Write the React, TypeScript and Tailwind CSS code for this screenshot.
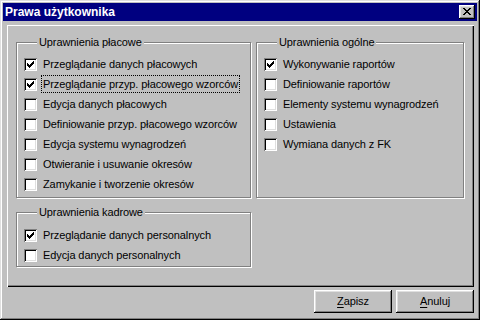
import React from 'react';

const font = { fontFamily: '"Liberation Sans", Arial, sans-serif' };

const CheckMark = () => (
    <svg width="7" height="7" viewBox="0 0 7 7" shapeRendering="crispEdges" className="absolute left-[3px] top-[3px]">
        <path d="M6 0h1v3h-1z M5 1h1v3h-1z M4 2h1v3h-1z M3 3h1v3h-1z M2 4h1v3h-1z M1 3h1v3h-1z M0 2h1v3h-1z" fill="#000" />
    </svg>
);

const CheckBox = ({ checked }: { checked?: boolean }) => (
    <div className="relative w-[13px] h-[13px] shrink-0 bg-white shadow-[inset_1px_1px_#808080,inset_-1px_-1px_#fff,inset_2px_2px_#000,inset_-2px_-2px_#dfdfdf]">
        {checked && <CheckMark />}
    </div>
);

const Row = ({ label, checked, focused }: { label: string, checked?: boolean, focused?: boolean }) => (
    <div className="flex items-center h-[20px]">
        <CheckBox checked={checked} />
        <span className={`ml-[4px] h-[18px] flex items-center pl-[1px] pr-[1px] border border-dotted ${focused ? 'border-black' : 'border-transparent'}`}>
            {label}
        </span>
    </div>
);

// etched group frame with the caption laid over its top line
const Group = ({ title, children, className }: { title: string, children: React.ReactNode, className: string }) => (
    <div className={`relative border border-[#808080] shadow-[inset_1px_1px_#fff,1px_1px_#fff] ${className}`}>
        <span className="absolute left-[20px] -top-[8px] bg-[#c0c0c0] px-[2px] leading-[14px]">{title}</span>
        {children}
    </div>
);

const Button = ({ hot, rest }: { hot: string, rest: string }) => (
    <div className="w-[78px] h-[23px] flex items-center justify-center shadow-[inset_-1px_-1px_#000,inset_1px_1px_#fff,inset_-2px_-2px_#808080,inset_2px_2px_#dfdfdf]">
        <span><u className="underline-offset-2">{hot}</u>{rest}</span>
    </div>
);

export default function App() {
    return (
        <div style={font} className="w-[480px] h-[320px] bg-[#c0c0c0] text-[11px] tracking-[-0.1px] text-black flex flex-col pt-[3px] px-[3px] shadow-[inset_-1px_-1px_#000,inset_1px_1px_#dfdfdf,inset_-2px_-2px_#808080,inset_2px_2px_#fff]">
            {/* Title bar */}
            <div className="h-[18px] bg-[#000080] flex items-center justify-between pl-[2px] pr-[2px]">
                <span className="text-white font-bold text-[12px] tracking-normal">Prawa użytkownika</span>
                <div className="relative w-[16px] h-[14px] bg-[#c0c0c0] shadow-[inset_-1px_-1px_#000,inset_1px_1px_#fff,inset_-2px_-2px_#808080,inset_2px_2px_#dfdfdf]">
                    <svg width="8" height="7" viewBox="0 0 8 7" shapeRendering="crispEdges" className="absolute left-[4px] top-[3px]">
                        <path d="M0 0h2v1h-2z M6 0h2v1h-2z M1 1h2v1h-2z M5 1h2v1h-2z M2 2h4v1h-4z M3 3h2v1h-2z M2 4h4v1h-4z M1 5h2v1h-2z M5 5h2v1h-2z M0 6h2v1h-2z M6 6h2v1h-2z" fill="#000" />
                    </svg>
                </div>
            </div>

            {/* Main panel */}
            <div className="mt-[4px] ml-[4px] w-[467px] h-[262px] flex pl-[9px] pt-[17px] shadow-[inset_1px_1px_#fff,inset_-1px_-1px_#000,inset_-2px_-2px_#808080]">
                <div className="flex flex-col w-[235px]">
                    <Group title="Uprawnienia płacowe" className="h-[156px] pt-[11px] pl-[7px]">
                        <Row label="Przeglądanie danych płacowych" checked />
                        <Row label="Przeglądanie przyp. płacowego wzorców" checked focused />
                        <Row label="Edycja danych płacowych" />
                        <Row label="Definiowanie przyp. płacowego wzorców" />
                        <Row label="Edycja systemu wynagrodzeń" />
                        <Row label="Otwieranie i usuwanie okresów" />
                        <Row label="Zamykanie i tworzenie okresów" />
                    </Group>
                    <Group title="Uprawnienia kadrowe" className="mt-[14px] h-[55px] pt-[12px] pl-[7px]">
                        <Row label="Przeglądanie danych personalnych" checked />
                        <Row label="Edycja danych personalnych" />
                    </Group>
                </div>
                <Group title="Uprawnienia ogólne" className="ml-[5px] w-[208px] h-[156px] pt-[11px] pl-[7px]">
                    <Row label="Wykonywanie raportów" checked />
                    <Row label="Definiowanie raportów" />
                    <Row label="Elementy systemu wynagrodzeń" />
                    <Row label="Ustawienia" />
                    <Row label="Wymiana danych z FK" />
                </Group>
            </div>

            {/* Buttons */}
            <div className="flex justify-end gap-[4px] mt-[3px] pr-[3px]">
                <Button hot="Z" rest="apisz" />
                <Button hot="A" rest="nuluj" />
            </div>
        </div>
    );
}
